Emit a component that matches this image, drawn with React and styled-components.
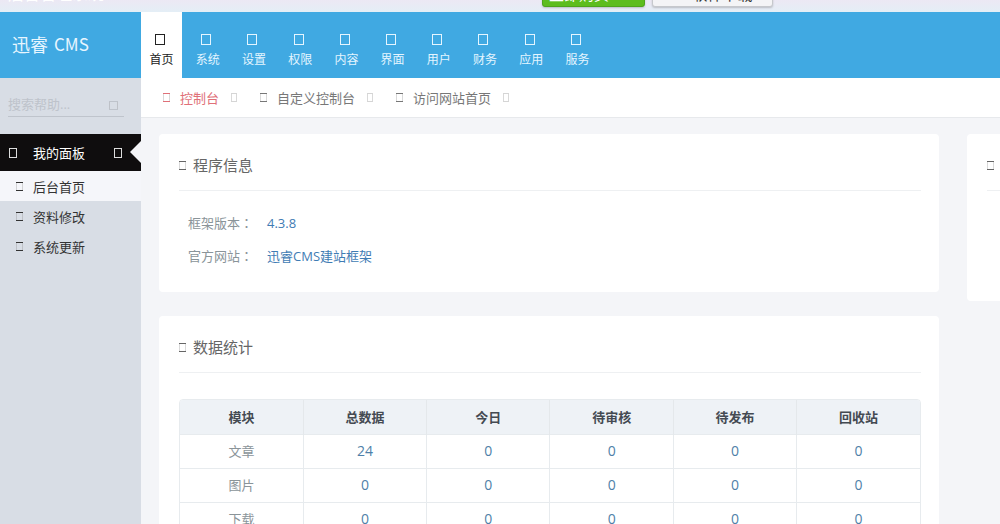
import React from 'react'
import styled, { createGlobalStyle } from 'styled-components';

const GlobalStyle = createGlobalStyle`
  * {
    box-sizing: border-box;
  }

  body {
    margin: 0;
    color: #666;
    background: #f4f5f8;
    font-family: "Open Sans", "Noto Sans CJK SC", sans-serif;
    font-size: 13px;
  }

  a {
    color: inherit;
    text-decoration: none;
  }

  button,
  input {
    font-family: inherit;
  }
`;

const Page = styled.div`
  display: flex;
  flex-direction: column;
  height: 100vh;
  overflow: hidden;
`;

const TopStrip = styled.div`
  display: flex;
  flex-shrink: 0;
  align-items: flex-end;
  height: 12px;
  padding-left: 8px;
  overflow: hidden;
  background: linear-gradient(#ece8f4, #e4eef6);
`;

const StripTitle = styled.div`
  flex: 0 0 534px;
  padding-bottom: 6px;
  color: #fff;
  font-size: 16px;
  line-height: 24px;
`;

const StripButton = styled.button`
  width: ${props => props.$primary ? '103px' : '121px'};
  height: 24px;
  margin: 0 7px 5px 0;
  padding: 0 0 2px ${props => props.$primary ? '6px' : '20px'};
  border: 1px solid ${props => props.$primary ? '#4ea51c' : '#c6c8cc'};
  border-radius: 3px;
  background: ${props => props.$primary ? '#5dbd1e' : '#f4f4f6'};
  box-shadow: 0 1px 2px rgba(0, 0, 0, 0.2);
  color: ${props => props.$primary ? '#fff' : '#333'};
  font-size: 15px;
  line-height: 20px;
  text-align: ${props => props.$primary ? 'left' : 'center'};
`;

const Header = styled.header`
  display: flex;
  flex-shrink: 0;
  height: 66px;
  background: #40a9e2;
`;

const Logo = styled.a`
  display: flex;
  flex: 0 0 141px;
  align-items: center;
  gap: 6px;
  padding: 0 0 3px 12px;
  color: #e8f6ff !important;
  font-size: 18px;
`;

const LogoLatin = styled.span`
  font-family: "Noto Sans CJK SC", sans-serif;
  font-size: 17px;
`;

const MainNav = styled.nav`
  display: grid;
  grid-template-columns: repeat(10, 1fr);
  gap: 5px;
  width: 457px;
`;

const NavItem = styled.a`
  display: flex;
  flex-direction: column;
  align-items: center;
  gap: 6px;
  padding-top: 22px;
  background: ${props => props.$active ? '#fff' : 'transparent'};
  color: ${props => props.$active ? '#222' : '#e4f5ff'};
  font-size: 12px;
  line-height: 18px;
  white-space: nowrap;
`;

const NavGlyph = styled.span`
  width: 10px;
  height: 11px;
  margin-right: 3px;
  border: 1px solid currentColor;
`;

const Body = styled.div`
  display: flex;
  flex: 1;
  min-height: 0;
`;

const Sidebar = styled.aside`
  flex-shrink: 0;
  width: 141px;
  background: #d8dde5;
`;

const SearchForm = styled.form`
  height: 56px;
  padding: 13px 17px 0 8px;
`;

const SearchLine = styled.label`
  display: flex;
  align-items: center;
  height: 26px;
  border-bottom: 1px solid #bfc4cc;
`;

const SearchInput = styled.input`
  flex: 1;
  width: 100%;
  min-width: 0;
  padding: 0;
  border: 0;
  outline: 0;
  background: none;
  color: #666;
  font-size: 13px;

  &::placeholder {
    color: #bec3cb;
    opacity: 1;
  }
`;

const SearchButton = styled.button`
  display: flex;
  padding: 4px 6px 0;
  border: 0;
  background: none;
  color: #bec3cb;
`;

/* Empty box glyph, its sides are fainter than top and bottom */
const Glyph = styled.span`
  flex-shrink: 0;
  width: ${props => props.$width || 7}px;
  height: 9px;
  border: solid currentColor;
  border-width: 1px 0;
  box-shadow: inset 1px 0 rgba(128, 128, 128, 0.3), inset -1px 0 rgba(128, 128, 128, 0.3);
`;

const MenuHeading = styled.button`
  position: relative;
  display: flex;
  align-items: center;
  width: 100%;
  height: 37px;
  padding: 0 19px 0 9px;
  border: 0;
  background: #0f0d0e;
  color: #fff;
  font-size: 13px;

  &::after {
    position: absolute;
    top: 7px;
    right: 0;
    border: 11px solid transparent;
    border-right-color: #f4f5f8;
    border-left-width: 0;
    content: "";
  }
`;

const MenuLabel = styled.span`
  flex: 1;
  margin-left: 16px;
  text-align: left;
`;

const MenuGlyph = styled.span`
  width: 8px;
  height: 10px;
  border: 1px solid #ddd;
`;

const MenuItem = styled.a`
  display: flex;
  align-items: center;
  gap: 10px;
  height: 30px;
  padding-left: 16px;
  background: ${props => props.$active ? '#f5f6fa' : 'transparent'};
  color: #333 !important;
`;

const Main = styled.main`
  flex: 1;
  min-width: 0;
`;

const TabBar = styled.nav`
  display: flex;
  align-items: center;
  gap: 23px;
  height: 40px;
  padding-left: 22px;
  border-bottom: 1px solid #e7e9ec;
  background: #fff;
`;

const Tab = styled.a`
  display: flex;
  align-items: center;
  gap: 10px;
  color: ${props => props.$active ? '#e07078' : '#777'};
  white-space: nowrap;
`;

const TabClose = styled.span`
  display: flex;
  margin-left: 2px;
  color: #d5d5d5;
`;

const Columns = styled.div`
  display: grid;
  grid-template-columns: minmax(0, 1fr) 33px;
  gap: 28px;
  align-items: start;
  padding: 16px 0 0 18px;
`;

const Stack = styled.div`
  display: flex;
  flex-direction: column;
  gap: 24px;
`;

const Card = styled.section`
  padding: 6px ${props => props.$cut ? '0' : '18px'} 19px 20px;
  border-radius: ${props => props.$cut ? '4px 0 0 4px' : '4px'};
  background: #fff;
`;

const SideCard = styled(Card)`
  min-height: 167px;
`;

const CardTitle = styled.h2`
  display: flex;
  align-items: center;
  gap: 7px;
  height: 51px;
  margin: 0;
  padding-bottom: 2px;
  border-bottom: 1px solid #eef0f2;
  color: #666;
  font-size: 15px;
  font-weight: normal;

  ${Glyph} {
    margin-top: 2px;
  }
`;

const InfoList = styled.dl`
  display: grid;
  grid-template-columns: 79px 1fr;
  margin: 16px 0 0;
  padding-left: 9px;
  line-height: 33px;
`;

const InfoLabel = styled.dt`
  color: #8a9499;

  /* this family centres the full-width colon */
  span {
    font-family: "Noto Sans CJK TC", sans-serif;
    line-height: 1;
  }
`;

const InfoValue = styled.dd`
  margin: 0;
  color: #3f7cb4;
`;

const TableFrame = styled.div`
  margin-top: 26px;
  overflow: hidden;
  border: 1px solid #e7ebee;
  border-radius: 4px;
`;

const Table = styled.table`
  width: 100%;
  border-collapse: collapse;
  table-layout: fixed;
  text-align: center;
`;

const HeadCell = styled.th`
  height: 34px;
  padding: 0;
  background: #eef2f6;
  color: #444a52;

  & + & {
    border-left: 1px solid #e4e8eb;
  }
`;

const Cell = styled.td`
  height: 34px;
  padding: 0 0 2px;
  border-top: 1px solid #e7ebee;
  color: #8a9499;

  & + & {
    border-left: 1px solid #e7ebee;
  }
`;

const Count = styled.a`
  color: #4f7fa8;
  font-size: 14px;
`;

const navItems = ['首页', '系统', '设置', '权限', '内容', '界面', '用户', '财务', '应用', '服务'];
const menuItems = ['后台首页', '资料修改', '系统更新'];
const tabs = ['控制台', '自定义控制台', '访问网站首页'];
const columns = ['模块', '总数据', '今日', '待审核', '待发布', '回收站'];
const modules = [
  { name: '文章', counts: [24, 0, 0, 0, 0] },
  { name: '图片', counts: [0, 0, 0, 0, 0] },
  { name: '下载', counts: [0, 0, 0, 0, 0] },
];

const App = () => {
  return (
    <Page>
      <GlobalStyle />
      <TopStrip>
        <StripTitle>后台管理系统</StripTitle>
        <StripButton type="button" $primary>立即购买</StripButton>
        <StripButton type="button">软件下载</StripButton>
      </TopStrip>
      <Header>
        <Logo href="#">
          迅睿
          <LogoLatin>CMS</LogoLatin>
        </Logo>
        <MainNav>
          {navItems.map((item, i) => (
            <NavItem key={item} href="#" $active={i === 0}>
              <NavGlyph />
              {item}
            </NavItem>
          ))}
        </MainNav>
      </Header>
      <Body>
        <Sidebar>
          <SearchForm>
            <SearchLine>
              <SearchInput type="text" placeholder="搜索帮助..." aria-label="搜索帮助" />
              <SearchButton type="button" aria-label="搜索">
                <Glyph $width={9} />
              </SearchButton>
            </SearchLine>
          </SearchForm>
          <MenuHeading type="button">
            <MenuGlyph />
            <MenuLabel>我的面板</MenuLabel>
            <MenuGlyph />
          </MenuHeading>
          {menuItems.map((item, i) => (
            <MenuItem key={item} href="#" $active={i === 0}>
              <Glyph />
              {item}
            </MenuItem>
          ))}
        </Sidebar>
        <Main>
          <TabBar>
            {tabs.map((tab, i) => (
              <Tab key={tab} href="#" $active={i === 0}>
                <Glyph />
                {tab}
                <TabClose><Glyph $width={6} /></TabClose>
              </Tab>
            ))}
          </TabBar>
          <Columns>
            <Stack>
              <Card>
                <CardTitle><Glyph />程序信息</CardTitle>
                <InfoList>
                  <InfoLabel>框架版本<span>：</span></InfoLabel>
                  <InfoValue><a href="#">4.3.8</a></InfoValue>
                  <InfoLabel>官方网站<span>：</span></InfoLabel>
                  <InfoValue><a href="#">迅睿CMS建站框架</a></InfoValue>
                </InfoList>
              </Card>
              <Card>
                <CardTitle><Glyph />数据统计</CardTitle>
                <TableFrame>
                  <Table>
                    <thead>
                      <tr>
                        {columns.map(column => <HeadCell key={column}>{column}</HeadCell>)}
                      </tr>
                    </thead>
                    <tbody>
                      {modules.map(({ name, counts }) => (
                        <tr key={name}>
                          <Cell>{name}</Cell>
                          {counts.map((count, i) => (
                            <Cell key={i}><Count href="#">{count}</Count></Cell>
                          ))}
                        </tr>
                      ))}
                    </tbody>
                  </Table>
                </TableFrame>
              </Card>
            </Stack>
            <SideCard $cut>
              <CardTitle><Glyph /></CardTitle>
            </SideCard>
          </Columns>
        </Main>
      </Body>
    </Page>
  )
}

export default App
